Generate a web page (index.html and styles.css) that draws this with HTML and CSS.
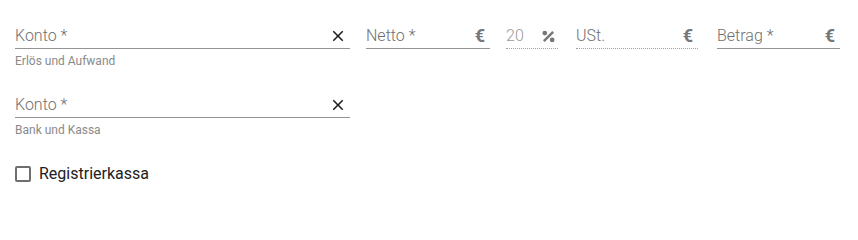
FILE: index.html
```html
<!DOCTYPE html>
<html lang="de">
<head>
<meta charset="utf-8">
<link rel="stylesheet" href="styles.css">
</head>
<body>
<div class="form">
  <div class="row">
    <div class="field konto">
      <div class="control">
        <span class="label">Konto *</span>
        <svg class="close" viewBox="0 0 24 24"><path d="M19 6.41 17.59 5 12 10.59 6.41 5 5 6.41 10.59 12 5 17.59 6.41 19 12 13.41 17.59 19 19 17.59 13.41 12z"/></svg>
      </div>
      <div class="hint">Erlös und Aufwand</div>
    </div>
    <div class="field netto">
      <div class="control">
        <span class="label">Netto *</span>
        <span class="euro">€</span>
      </div>
    </div>
    <div class="field rate">
      <div class="control dotted">
        <span class="value">20</span>
        <svg class="pct" viewBox="0 0 12 12"><circle cx="2.6" cy="2.8" r="2.2"/><circle cx="9.4" cy="9.2" r="2.2"/><path d="M9.5 1 11.1 2.6 2.5 11 0.9 9.4z"/></svg>
      </div>
    </div>
    <div class="field ust">
      <div class="control dotted">
        <span class="label">USt.</span>
        <span class="euro">€</span>
      </div>
    </div>
    <div class="field betrag">
      <div class="control">
        <span class="label">Betrag *</span>
        <span class="euro">€</span>
      </div>
    </div>
  </div>
  <div class="row row2">
    <div class="field konto">
      <div class="control">
        <span class="label">Konto *</span>
        <svg class="close" viewBox="0 0 24 24"><path d="M19 6.41 17.59 5 12 10.59 6.41 5 5 6.41 10.59 12 5 17.59 6.41 19 12 13.41 17.59 19 19 17.59 13.41 12z"/></svg>
      </div>
      <div class="hint">Bank und Kassa</div>
    </div>
  </div>
  <label class="check">
    <span class="box"></span>
    <span class="check-label">Registrierkassa</span>
  </label>
</div>
</body>
</html>
```
FILE: styles.css
```css
html, body {
  margin: 0;
  padding: 0;
  background: #ffffff;
}
body {
  font-family: Roboto, "Liberation Sans", Arial, sans-serif;
  width: 858px;
  height: 200px;
  overflow: hidden;
}
.form {
  padding: 22px 18px 0 15px;
}
.row {
  display: flex;
  gap: 16px;
  align-items: flex-start;
}
.row2 {
  margin-top: 23px;
}
.field.konto { width: 335px; }
.field.netto { width: 124px; }
.field.rate { width: 52px; }
.field.ust { width: 122px; margin-left: 2px; }
.field.betrag { width: 123px; margin-left: 3px; }
.control {
  display: flex;
  align-items: center;
  justify-content: space-between;
  height: 24px;
  padding-top: 2px;
  border-bottom: 1px solid #949494;
}
.control.dotted {
  border-bottom: 1px dotted #a0a0a0;
}
.label, .value {
  font-size: 16px;
  font-weight: 300;
  line-height: 20px;
  color: #6f6f6f;
}
.value {
  color: #9a9a9a;
}
.close {
  width: 18px;
  height: 18px;
  fill: #1a1a1a;
  margin-right: 3px;
}
.euro {
  font-size: 18px;
  font-weight: 700;
  line-height: 20px;
  color: #777777;
  margin-right: 5px;
}
.pct {
  width: 13px;
  height: 13px;
  fill: #777777;
  margin-right: 3px;
}
.hint {
  font-size: 12px;
  line-height: 14px;
  color: #8a8a8a;
  margin-top: 5px;
}
.check {
  display: flex;
  align-items: center;
  gap: 8px;
  margin-top: 27px;
}
.box {
  width: 12px;
  height: 12px;
  border: 2px solid #6e6e6e;
  border-radius: 2px;
}
.check-label {
  font-size: 16px;
  line-height: 20px;
  color: #212121;
}
```
